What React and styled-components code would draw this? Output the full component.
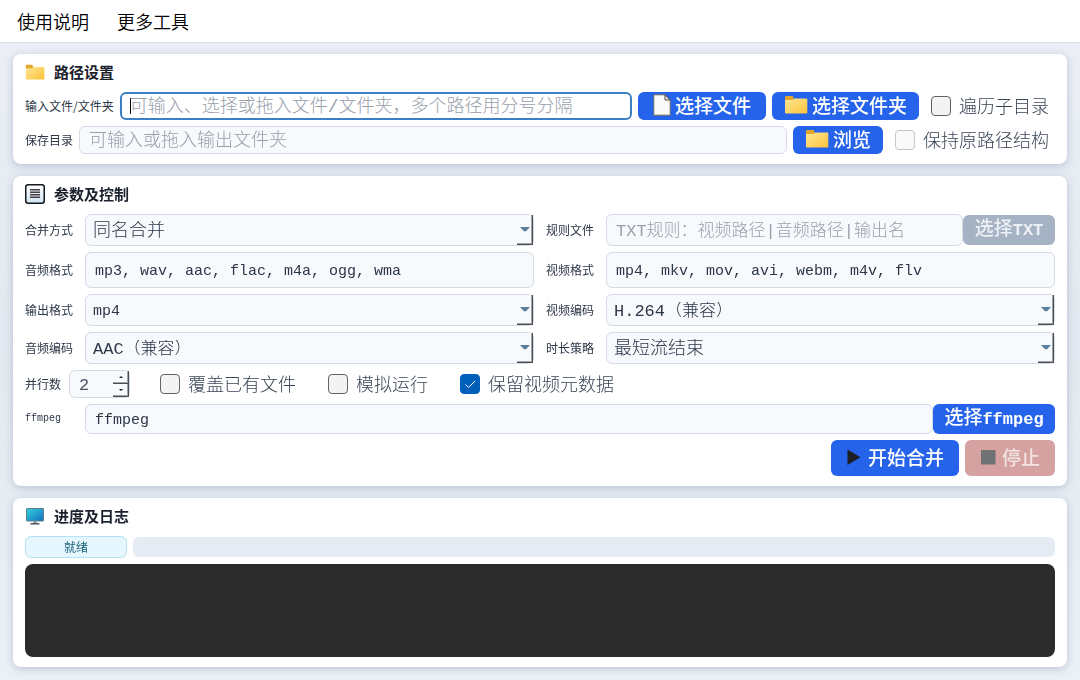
import React, { useState } from 'react'
import styled, { createGlobalStyle, css } from 'styled-components'

const uiFont = `"Noto Sans CJK SC", sans-serif`
const fieldFont = `"Liberation Mono", "Noto Sans CJK SC", monospace`

const GlobalStyle = createGlobalStyle`
*{box-sizing:border-box;}
body{
margin:0;
background:linear-gradient(180deg, #ecf0f6 0%, #e4e9f1 50%, #ecf1f5 100%);
font-family:${uiFont};
color:#1f2937;
}
button,input,select,textarea{font-family:inherit; margin:0;}
`
const Page = styled.div`
min-height:100vh;
display:flex;
flex-direction:column;
`
const MenuBar = styled.nav`
height:43px;
display:flex;
align-items:center;
gap:28px;
padding:0 17px;
background-color:#ffffff;
border-bottom:1px solid #dde3ea;
`
const MenuItem = styled.button`
border:none;
padding:0;
background:none;
font-size:18px;
line-height:24px;
font-weight:350;
color:#000000;
cursor:pointer;
`
const Main = styled.main`
flex:1;
display:flex;
flex-direction:column;
gap:12px;
padding:11px 13px 13px;
`
const Card = styled.section`
display:flex;
flex-direction:column;
gap:6px;
padding:6px 12px 10px;
background-color:#ffffff;
border-radius:8px;
box-shadow:0 2px 9px rgba(71,95,135,0.3);
flex:${props => props.$grow ? "1" : "none"};
`
const CardTitle = styled.h2`
height:24px;
margin:0 0 2px;
display:flex;
align-items:center;
gap:9px;
font-size:15px;
line-height:24px;
font-weight:700;
color:#1a202c;
`
const Row = styled.div`
display:flex;
align-items:center;
gap:${props => props.$gap || "6px"};
justify-content:${props => props.$end ? "flex-end" : "flex-start"};
`
const Columns = styled.div`
display:grid;
grid-template-columns:1fr 1fr;
gap:6px 12px;
`
const Field = styled.div`
display:flex;
align-items:center;
min-width:0;
`
const Label = styled.label`
flex:none;
width:${props => props.$fixed ? "60px" : "auto"};
font-family:${props => props.$mono ? fieldFont : uiFont};
font-size:${props => props.$mono ? 10 : 12}px;
line-height:16px;
color:#2d3748;
`
const fieldBox = css`
border:1px solid #d3dbe6;
border-radius:6px;
background-color:#f7f9fd;
color:#2d3748;
font-family:${fieldFont};
font-weight:300;
outline:none;
`
const TextInput = styled.input`
${fieldBox}
flex:1;
min-width:0;
width:100%;
height:${props => props.$height || 28}px;
padding:2px 9px 0;
font-size:${props => props.$size || 18}px;
&::placeholder{color:#98a0ac; opacity:1;}
&:focus{
border:2px solid #3a80c3;
padding:2px 8px 0;
background-color:#ffffff;
caret-color:#000000;
}
&:focus:placeholder-shown{
background-image:linear-gradient(#000000, #000000);
background-size:1px 16px;
background-position:8px center;
background-repeat:no-repeat;
}
`
const SelectWrap = styled.div`
flex:1;
min-width:0;
position:relative;
`
const SelectBox = styled.select`
${fieldBox}
display:block;
appearance:none;
width:100%;
height:32px;
padding:2px 20px 0 7px;
font-size:${props => props.$size || 18}px;
`
const raised = css`
border:none;
border-right:1px solid #4a4d52;
border-bottom:1px solid #4a4d52;
box-shadow:inset -1px -1px #a0a3a8;
background-color:#f7f9fd;
`
const DropMark = styled.span`
${raised}
position:absolute;
top:1px;
right:1px;
width:16px;
height:30px;
display:flex;
align-items:center;
justify-content:center;
pointer-events:none;
`
const Button = styled.button`
flex:none;
display:flex;
align-items:center;
justify-content:center;
gap:4px;
width:${props => props.$width}px;
height:${props => props.$height || 28}px;
padding:0 0 2px;
border:none;
border-radius:6px;
background-color:#2563eb;
color:#ffffff;
font-size:19px;
line-height:24px;
font-weight:500;
white-space:nowrap;
cursor:pointer;
&:disabled{
background-color:${props => props.$danger ? "#d6a1a1" : "#a6b3c4"};
color:${props => props.$danger ? "#f3e4e4" : "#edf1f5"};
cursor:default;
}
`
const Latin = styled.span`
font-family:"Liberation Mono", monospace;
font-size:17px;
font-weight:700;
`
const Caption = styled.span`
display:block;
`
const CheckLabel = styled.label`
flex:none;
display:flex;
align-items:center;
gap:8px;
padding:0 6px;
font-size:18px;
line-height:24px;
font-weight:300;
color:#3a4556;
`
const CheckText = styled.span`
padding-bottom:2px;
`
const CheckBox = styled.input`
appearance:none;
flex:none;
width:20px;
height:20px;
margin:0;
border:1px solid #5f6164;
border-radius:4px;
background-color:#f3f3f3;
&:disabled{border-color:#c6c6c6; background-color:#f9f9f9;}
&:checked{
border-color:#005fb8;
background:#005fb8 url("data:image/svg+xml,%3Csvg xmlns='http://www.w3.org/2000/svg' viewBox='0 0 18 18'%3E%3Cpath d='M4.5 9.500l3 3 6.500-6.500' fill='none' stroke='white'/%3E%3C/svg%3E") center / 18px no-repeat;
}
`
const Spinner = styled.div`
flex:none;
display:flex;
width:61px;
height:28px;
margin:0 18px 0 2px;
border:1px solid #d3dbe6;
border-radius:6px;
background-color:#f7f9fd;
`
const SpinInput = styled.input`
flex:1;
min-width:0;
padding:2px 0 0 9px;
border:none;
outline:none;
background:none;
font-family:${fieldFont};
font-size:17px;
color:#4a5568;
appearance:textfield;
&::-webkit-inner-spin-button{appearance:none;}
`
const SpinButtons = styled.div`
display:flex;
flex-direction:column;
width:16px;
`
const SpinButton = styled.button`
${raised}
flex:1;
display:flex;
align-items:center;
justify-content:center;
padding:0;
`
const Status = styled.div`
width:102px;
height:22px;
border:1px solid #b5e3f5;
border-radius:6px;
background-color:#e6f7ff;
color:#155e75;
font-size:12px;
line-height:20px;
text-align:center;
`
const Track = styled.div`
flex:1;
height:20px;
border-radius:6px;
background-color:#e6ecf4;
overflow:hidden;
`
const Bar = styled.div`
height:100%;
background-color:#2563eb;
`
const Log = styled.textarea`
flex:1;
display:block;
width:100%;
min-height:93px;
padding:8px;
border:none;
border-radius:8px;
outline:none;
resize:none;
background-color:#2b2b2b;
color:#e2e8f0;
font-size:12px;
`

const FolderIcon = ({ width = 24 }) => (
  <svg width={width} height={width * 0.8} viewBox="0 0 24 19" preserveAspectRatio="none" aria-hidden="true">
    <defs>
      <linearGradient id="folder" x1="0" y1="0" x2="1" y2="1">
        <stop offset="0" stopColor="#ffe596" />
        <stop offset="1" stopColor="#fbc43a" />
      </linearGradient>
    </defs>
    <path d="M1 2Q1 1 2 1h6q1 0 1.300 1l.3 1.500V6H1z" fill="#e0a62c" />
    <path d="M1 5h7.500l1.800-1.500H22.500q.8 0 .8.800V17.500q0 .8-.8.800H1.800q-.8 0-.8-.8z" fill="url(#folder)" />
  </svg>
)

const FileIcon = () => (
  <svg width="18" height="22" viewBox="0 0 18 22" aria-hidden="true">
    <path d="M.8.8H12l5.200 5.200v15.200H.8z" fill="#fafafa" stroke="#6e6a5e" />
    <path d="M12 .8V6h5.200z" fill="#e9e9e9" stroke="#4d4a42" />
  </svg>
)

const ListIcon = () => (
  <svg width="20" height="20" viewBox="0 0 20 20" aria-hidden="true">
    <defs>
      <linearGradient id="sheet" x1="0" y1="0" x2="0" y2="1">
        <stop offset="0" stopColor="#ffffff" />
        <stop offset="1" stopColor="#cfe2f0" />
      </linearGradient>
    </defs>
    <rect x=".75" y=".75" width="18.500" height="18.500" rx="2.500" fill="url(#sheet)" stroke="#15181c" strokeWidth="1.500" />
    <path d="M5 5.800h10M5 8.300h10M5 10.800h10M5 13.300h10" stroke="#453f44" strokeWidth="1.600" />
  </svg>
)

const ScreenIcon = () => (
  <svg width="20" height="18" viewBox="0 0 20 18" aria-hidden="true">
    <defs>
      <linearGradient id="screen" x1="0" y1="0" x2="1" y2="1">
        <stop offset="0" stopColor="#38d3d8" />
        <stop offset="1" stopColor="#0f6fc4" />
      </linearGradient>
    </defs>
    <rect x="1.500" y="1.500" width="17" height="12.500" rx=".5" fill="url(#screen)" stroke="#5d7d8c" />
    <path d="M8.500 14.500h3v2h-3z" fill="#7b8790" />
    <path d="M5.500 16.800h9" stroke="#4a555e" strokeWidth="1.500" />
  </svg>
)

const PlayIcon = () => (
  <svg width="18" height="18" viewBox="0 0 18 18" aria-hidden="true">
    <path d="M1.500 1.500v15.500L14.500 9.200z" fill="#1c1f24" />
  </svg>
)

const StopIcon = () => (
  <svg width="18" height="16" viewBox="0 0 18 16" aria-hidden="true">
    <path d="M1 1h14.500v14.500H1z" fill="#6f7173" />
  </svg>
)

const Triangle = ({ up, small }) => (
  <svg width={small ? 4 : 10} height={small ? 2 : 5} viewBox="0 0 10 6" preserveAspectRatio="none" aria-hidden="true">
    <path d={up ? "M0 6h10L5 0z" : "M0 0h10L6 5H4z"} fill={small ? "#222222" : "#5b7f9c"} />
  </svg>
)

const Select = ({ id, label, value, size }) => (
  <Field>
    <Label $fixed htmlFor={id}>{label}</Label>
    <SelectWrap>
      <SelectBox id={id} $size={size}>
        <option>{value}</option>
      </SelectBox>
      <DropMark><Triangle /></DropMark>
    </SelectWrap>
  </Field>
)

const Check = ({ children, ...rest }) => (
  <CheckLabel>
    <CheckBox type="checkbox" {...rest} />
    <CheckText>{children}</CheckText>
  </CheckLabel>
)

const App = () => {
  const [jobs, setJobs] = useState(2)
  const progress = 0

  return (
    <Page>
      <GlobalStyle />
      <MenuBar>
        <MenuItem>使用说明</MenuItem>
        <MenuItem>更多工具</MenuItem>
      </MenuBar>
      <Main>
        <Card>
          <CardTitle><FolderIcon width={20} />路径设置</CardTitle>
          <Row>
            <Label htmlFor="input">输入文件/文件夹</Label>
            <TextInput id="input" autoFocus placeholder="可输入、选择或拖入文件/文件夹，多个路径用分号分隔" />
            <Button $width={128}><FileIcon />选择文件</Button>
            <Button $width={147}><FolderIcon />选择文件夹</Button>
            <Check>遍历子目录</Check>
          </Row>
          <Row>
            <Label htmlFor="output">保存目录</Label>
            <TextInput id="output" placeholder="可输入或拖入输出文件夹" />
            <Button $width={90}><FolderIcon />浏览</Button>
            <Check disabled>保持原路径结构</Check>
          </Row>
        </Card>

        <Card>
          <CardTitle><ListIcon />参数及控制</CardTitle>
          <Columns>
            <Select id="mode" label="合并方式" value="同名合并" />
            <Field>
              <Label $fixed htmlFor="rules">规则文件</Label>
              <TextInput id="rules" $height={32} $size={17} disabled placeholder="TXT规则：视频路径|音频路径|输出名" />
              <Button $width={92} $height={30} disabled><Caption>选择<Latin>TXT</Latin></Caption></Button>
            </Field>
            <Field>
              <Label $fixed htmlFor="audio">音频格式</Label>
              <TextInput id="audio" $height={36} $size={15} defaultValue="mp3, wav, aac, flac, m4a, ogg, wma" />
            </Field>
            <Field>
              <Label $fixed htmlFor="video">视频格式</Label>
              <TextInput id="video" $height={36} $size={15} defaultValue="mp4, mkv, mov, avi, webm, m4v, flv" />
            </Field>
            <Select id="format" label="输出格式" value="mp4" size={15} />
            <Select id="vcodec" label="视频编码" value="H.264（兼容）" size={17} />
            <Select id="acodec" label="音频编码" value="AAC（兼容）" size={17} />
            <Select id="length" label="时长策略" value="最短流结束" />
          </Columns>
          <Row>
            <Label htmlFor="jobs">并行数</Label>
            <Spinner>
              <SpinInput id="jobs" type="number" value={jobs} onChange={e => setJobs(Number(e.target.value))} />
              <SpinButtons>
                <SpinButton aria-label="+" onClick={() => setJobs(jobs + 1)}><Triangle up small /></SpinButton>
                <SpinButton aria-label="-" onClick={() => setJobs(Math.max(1, jobs - 1))}><Triangle small /></SpinButton>
              </SpinButtons>
            </Spinner>
            <Row $gap="20px">
              <Check>覆盖已有文件</Check>
              <Check>模拟运行</Check>
              <Check defaultChecked>保留视频元数据</Check>
            </Row>
          </Row>
          <Field>
            <Label $fixed $mono htmlFor="ffmpeg">ffmpeg</Label>
            <TextInput id="ffmpeg" $height={30} $size={15} defaultValue="ffmpeg" />
            <Button $width={122} $height={30}><Caption>选择<Latin>ffmpeg</Latin></Caption></Button>
          </Field>
          <Row $end>
            <Button $width={128} $height={36}><PlayIcon />开始合并</Button>
            <Button $width={90} $height={36} $danger disabled><StopIcon />停止</Button>
          </Row>
        </Card>

        <Card $grow>
          <CardTitle><ScreenIcon />进度及日志</CardTitle>
          <Row>
            <Status role="status">就绪</Status>
            <Track><Bar style={{ width: `${progress}%` }} /></Track>
          </Row>
          <Log readOnly aria-label="日志" />
        </Card>
      </Main>
    </Page>
  )
}

export default App
